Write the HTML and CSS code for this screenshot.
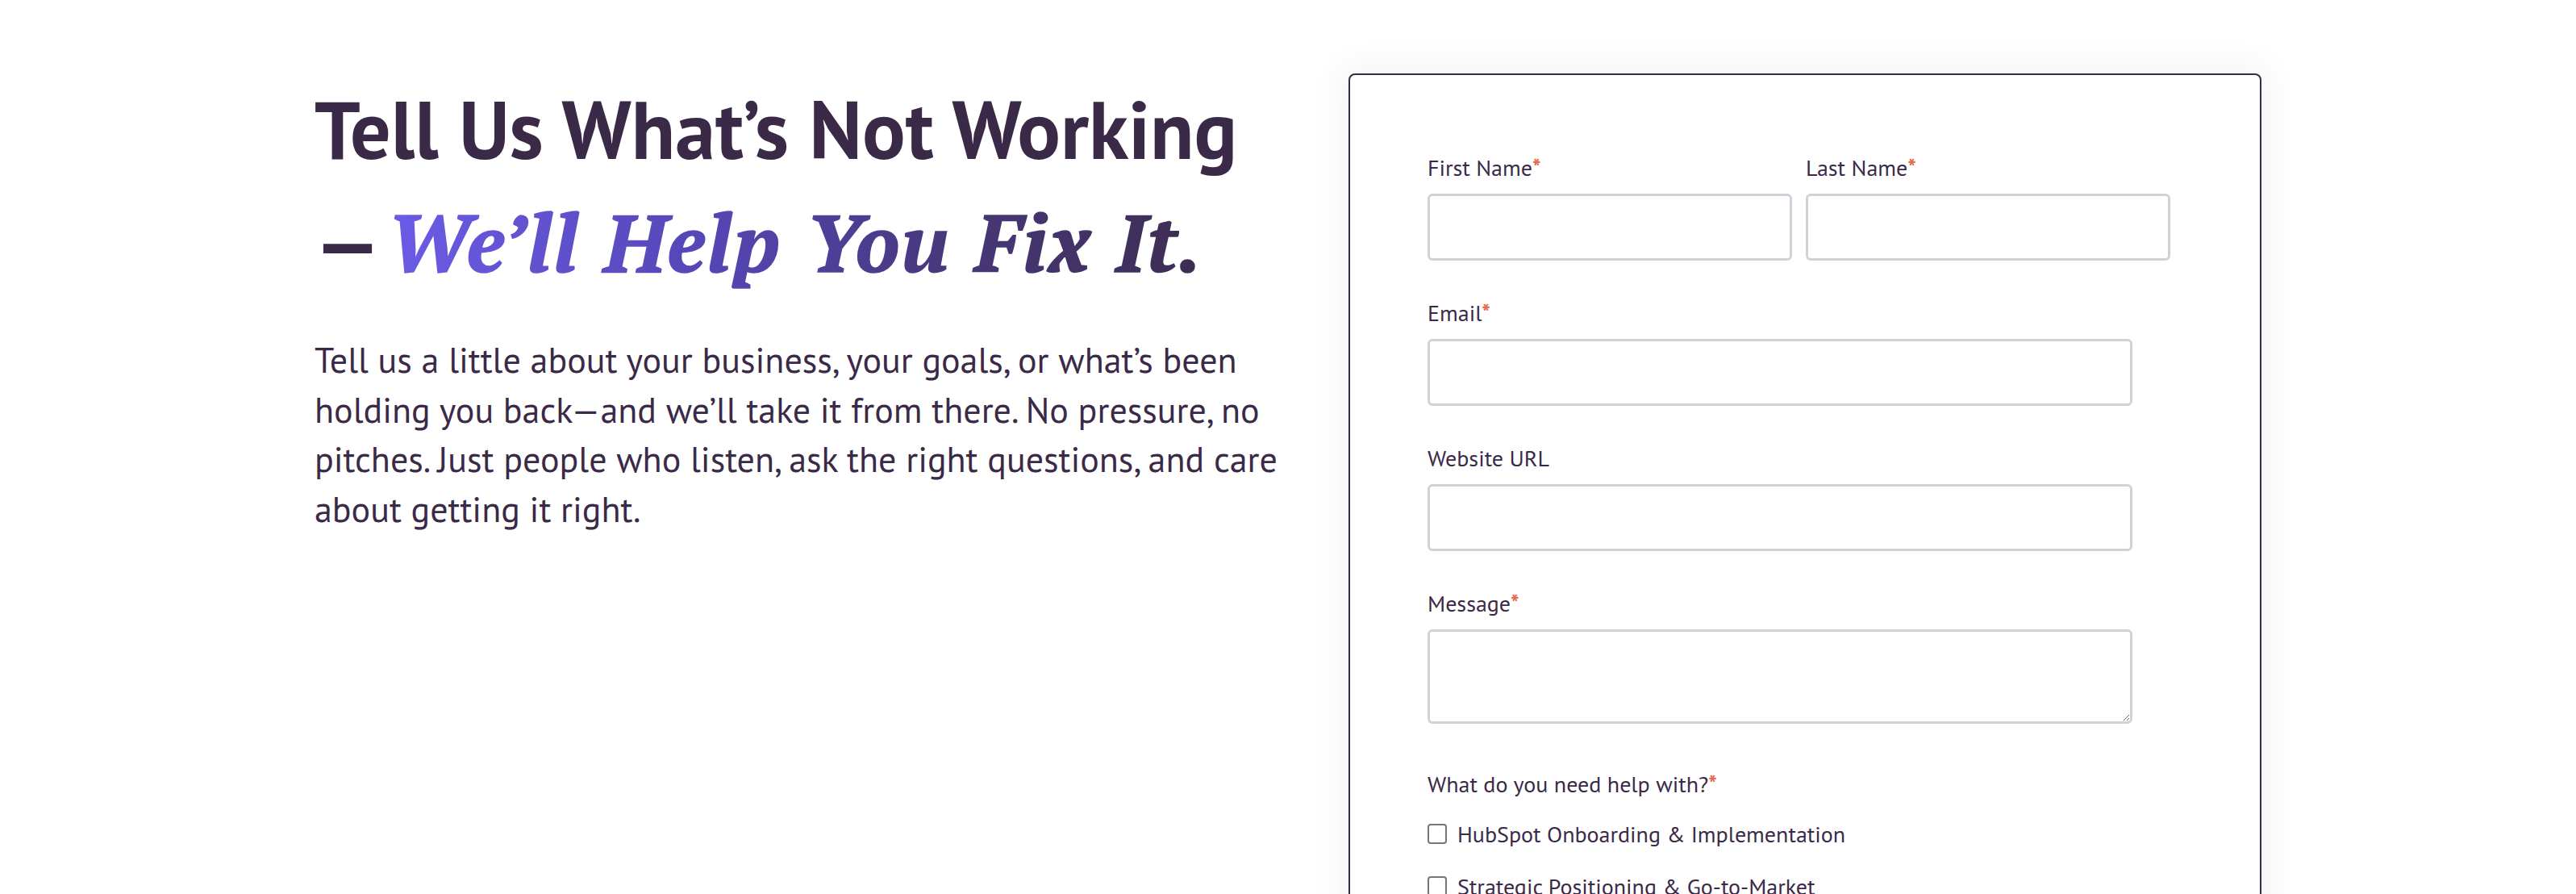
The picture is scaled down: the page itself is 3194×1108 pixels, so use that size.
FILE: index.html
```html
<!DOCTYPE html>
<html lang="en">
<head>
<meta charset="utf-8">
<title>Tell Us What’s Not Working</title>
<link rel="stylesheet" href="styles.css">
</head>
<body>
<main class="contact">
  <section class="intro">
    <h1 class="title">Tell Us What’s Not Working<br><span class="dash">—</span><em class="accent">We’ll Help You Fix It.</em></h1>
    <p class="lead">Tell us a little about your business, your goals, or what’s been holding you back—and we’ll take it from there. No pressure, no pitches. Just people who listen, ask the right questions, and care about getting it right.</p>
  </section>
  <section class="card">
    <form class="form">
      <div class="row-two">
        <div class="field">
          <label class="label" for="fn">First Name<span class="req">*</span></label>
          <input class="input" id="fn" type="text">
        </div>
        <div class="field">
          <label class="label" for="ln">Last Name<span class="req">*</span></label>
          <input class="input" id="ln" type="text">
        </div>
      </div>
      <div class="field single">
        <label class="label" for="em">Email<span class="req">*</span></label>
        <input class="input" id="em" type="email">
      </div>
      <div class="field single">
        <label class="label" for="web">Website URL</label>
        <input class="input" id="web" type="text">
      </div>
      <div class="field single">
        <label class="label" for="msg">Message<span class="req">*</span></label>
        <textarea class="input textarea" id="msg"></textarea>
      </div>
      <div class="field single checks">
        <span class="label">What do you need help with?<span class="req">*</span></span>
        <ul class="check-list">
          <li><label class="check"><input type="checkbox" class="box"><span>HubSpot Onboarding &amp; Implementation</span></label></li>
          <li><label class="check"><input type="checkbox" class="box"><span>Strategic Positioning &amp; Go-to-Market</span></label></li>
        </ul>
      </div>
    </form>
  </section>
</main>
</body>
</html>
```
FILE: styles.css
```css
* { box-sizing: border-box; }
html, body { margin: 0; padding: 0; background: #ffffff; }
body {
  font-family: "PT Sans", "Noto Sans", "Liberation Sans", sans-serif;
  color: #3b2a47;
  overflow: hidden;
}
.contact {
  width: 2414px;
  margin: 0 auto;
  padding-top: 90px;
  display: flex;
  justify-content: space-between;
  align-items: flex-start;
}
.intro { width: 1230px; }
.title {
  margin: 0;
  font-size: 100px;
  line-height: 140px;
  font-weight: 700;
  color: #3b2a47;
  letter-spacing: 0;
}
.dash { font-weight: 700; }
.accent {
  font-family: "PT Serif", "Liberation Serif", serif;
  font-style: italic;
  font-weight: 700;
  letter-spacing: 2.4px;
  background: linear-gradient(90deg, #6c5ce7 0%, #5546b5 40%, #473779 70%, #3d2d52 100%);
  -webkit-background-clip: text;
  background-clip: text;
  color: transparent;
  -webkit-text-stroke: 1.6px transparent;
  padding-left: 8px;
}
.lead {
  margin: 45px 0 0;
  font-size: 44px;
  line-height: 61.5px;
  color: #3b2a47;
}
.card {
  width: 1132px;
  min-height: 1200px;
  margin-top: 1px;
  border: 2px solid #3b2a47;
  border-radius: 8px;
  background: #ffffff;
  box-shadow: 0 0 40px 12px rgba(0, 0, 0, 0.045);
}
.form {
  padding: 95px 96px 80px;
  display: flex;
  flex-direction: column;
  gap: 45px;
}
.row-two {
  width: 921px;
  display: grid;
  grid-template-columns: 1fr 1fr;
  gap: 17px;
}
.field { display: flex; flex-direction: column; }
.single { width: 874px; }
.label {
  font-size: 28px;
  line-height: 39px;
  color: #3b2a47;
}
.req {
  color: #e5694c;
  font-size: 28px;
  font-weight: 700;
  line-height: 1;
}
.input {
  margin-top: 13px;
  width: 100%;
  height: 83px;
  border: 3px solid #cfd3d8;
  border-radius: 6px;
  background: #ffffff;
  font: inherit;
  font-size: 28px;
  padding: 0 16px;
  outline: none;
}
.textarea {
  height: 117px;
  resize: vertical;
  display: block;
  padding: 12px 16px;
}
.checks { margin-top: 10px; }
.check-list {
  list-style: none;
  margin: 0;
  padding: 0;
  display: flex;
  flex-direction: column;
  gap: 26px;
  margin-top: 23px;
}
.check {
  display: flex;
  align-items: center;
  gap: 13px;
  font-size: 28px;
  line-height: 39px;
  color: #3b2a47;
}
.box {
  -webkit-appearance: none;
  appearance: none;
  margin: 0;
  width: 24px;
  height: 25px;
  border: 2px solid #767676;
  border-radius: 4px;
  background: #ffffff;
  flex: none;
}
```
